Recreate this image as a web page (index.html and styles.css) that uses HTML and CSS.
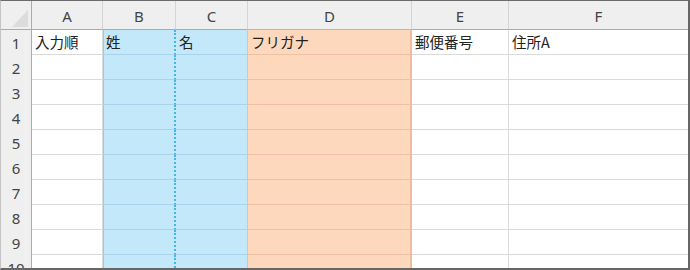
FILE: index.html
```html
<!DOCTYPE html>
<html lang="ja">
<head>
<meta charset="utf-8">
<link rel="stylesheet" href="styles.css">
</head>
<body>
<div class="sheet">
  <div class="corner"><svg width="30" height="28" viewBox="0 0 30 28"><polygon points="11,26 27,26 27,9" fill="#dcdcdc"/></svg></div>
  <div class="ch">A</div><div class="ch">B</div><div class="ch">C</div><div class="ch chd">D</div><div class="ch">E</div><div class="ch chf">F</div>

  <div class="rh">1</div><div class="c">入力順</div><div class="c blue b">姓</div><div class="c blue">名</div><div class="c peach">フリガナ</div><div class="c">郵便番号</div><div class="c f">住所A</div>
  <div class="rh">2</div><div class="c"></div><div class="c blue b"></div><div class="c blue"></div><div class="c peach"></div><div class="c"></div><div class="c f"></div>
  <div class="rh">3</div><div class="c"></div><div class="c blue b"></div><div class="c blue"></div><div class="c peach"></div><div class="c"></div><div class="c f"></div>
  <div class="rh">4</div><div class="c"></div><div class="c blue b"></div><div class="c blue"></div><div class="c peach"></div><div class="c"></div><div class="c f"></div>
  <div class="rh">5</div><div class="c"></div><div class="c blue b"></div><div class="c blue"></div><div class="c peach"></div><div class="c"></div><div class="c f"></div>
  <div class="rh">6</div><div class="c"></div><div class="c blue b"></div><div class="c blue"></div><div class="c peach"></div><div class="c"></div><div class="c f"></div>
  <div class="rh">7</div><div class="c"></div><div class="c blue b"></div><div class="c blue"></div><div class="c peach"></div><div class="c"></div><div class="c f"></div>
  <div class="rh">8</div><div class="c"></div><div class="c blue b"></div><div class="c blue"></div><div class="c peach"></div><div class="c"></div><div class="c f"></div>
  <div class="rh">9</div><div class="c"></div><div class="c blue b"></div><div class="c blue"></div><div class="c peach"></div><div class="c"></div><div class="c f"></div>
  <div class="rh">10</div><div class="c"></div><div class="c blue b"></div><div class="c blue"></div><div class="c peach"></div><div class="c"></div><div class="c f"></div>
</div>
</body>
</html>
```
FILE: styles.css
```css
* { box-sizing: border-box; }
html, body { margin: 0; padding: 0; background: #fff; }
.sheet {
  width: 690px;
  height: 270px;
  overflow: hidden;
  border-top: 1px solid #6b6b6b;
  border-left: 1px solid #c4c4c4;
  border-right: 2px solid #666;
  border-bottom: 2px solid #666;
  display: grid;
  grid-template-columns: 31px 71px 73px 72px 164px 97px 179px;
  grid-template-rows: 29px repeat(10, 25px);
  font-family: "Noto Sans CJK JP", "Noto Sans", sans-serif;
  font-size: 14.5px;
  color: #222;
}
.corner {
  background: #efefef;
  border-right: 1px solid #ababab;
  border-bottom: 1px solid #ababab;
  overflow: hidden;
}
.corner svg { display: block; }
.ch {
  background: #efefef;
  border-right: 1px solid #d4d4d4;
  border-bottom: 1px solid #ababab;
  display: flex;
  align-items: center;
  justify-content: center;
  font-family: "Noto Sans", sans-serif;
  font-size: 15px;
  color: #444;
  padding-top: 1px;
}
.ch.chd { border-bottom-color: #e0ab8a; }
.ch.chf { border-right: none; }
.rh {
  background: #efefef;
  border-right: 1px solid #ababab;
  display: flex;
  align-items: center;
  justify-content: center;
  font-family: "Noto Sans", sans-serif;
  font-size: 15px;
  color: #444;
}
.c {
  border-right: 1px solid #dadada;
  border-bottom: 1px solid #dadada;
  display: flex;
  align-items: center;
  padding-left: 3px;
  white-space: nowrap;
  line-height: 1;
}
.c.f { border-right: none; }
.blue {
  background: #c2e8fa;
  border-right-color: #a9d3ea;
  border-bottom-color: #a9d3ea;
}
.blue.b {
  border-left: 1px solid #9ccae6;
  border-right: 2px dotted #45b6ec;
  padding-left: 2px;
}
.peach {
  background: #fdd8bd;
  border-right: 2px solid #f2bc98;
  border-bottom-color: #efc1a2;
}
```
